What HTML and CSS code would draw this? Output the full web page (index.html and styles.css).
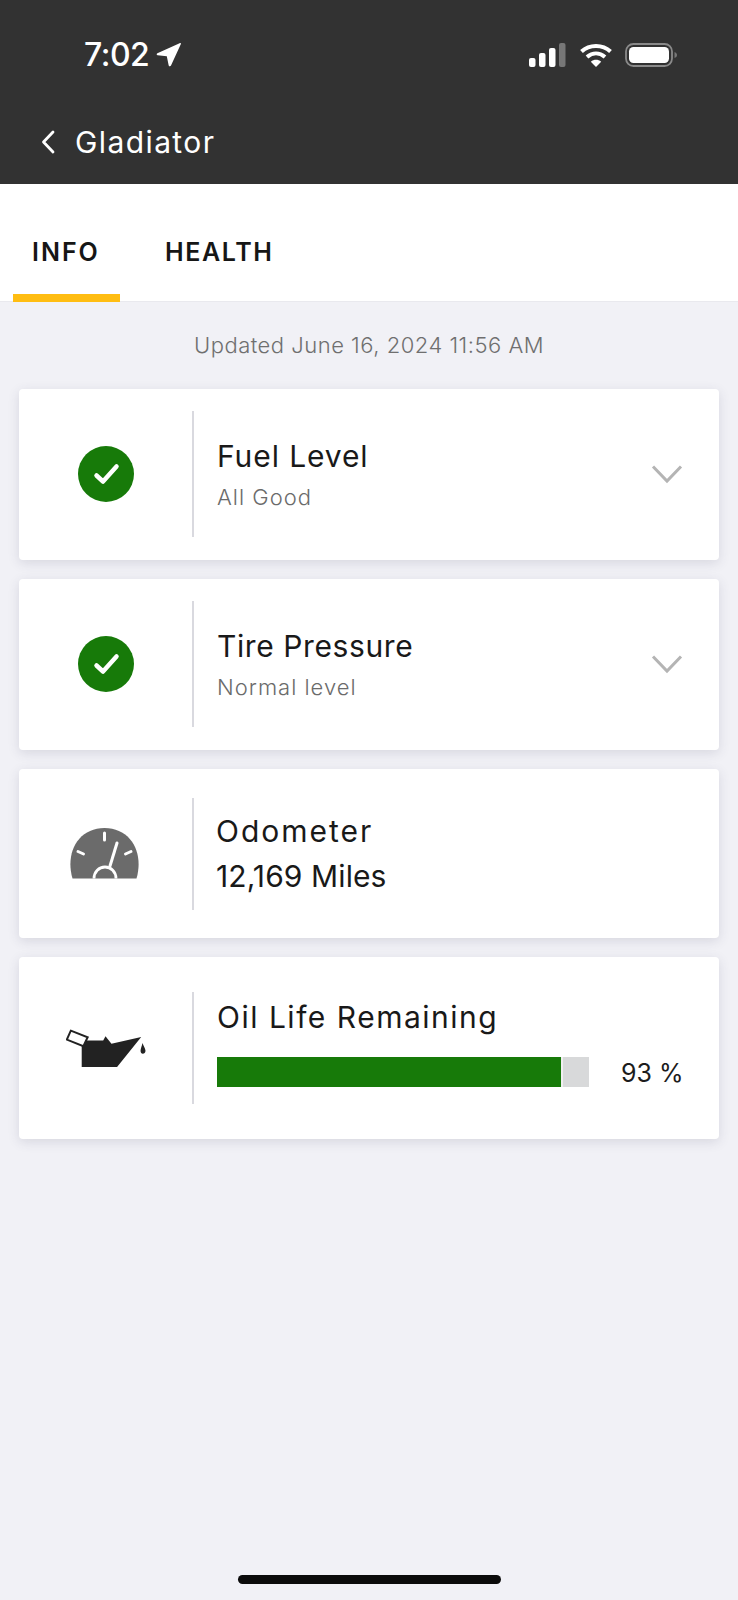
FILE: index.html
```html
<!DOCTYPE html>
<html lang="en">
<head>
<meta charset="utf-8">
<title>Gladiator</title>
<link rel="stylesheet" href="styles.css">
</head>
<body>
<div class="screen">
  <header class="header">
    <div class="status">
      <div class="status-left">
        <span class="time">7:02</span>
        <svg class="loc" viewBox="0 0 26 24"><path d="M25 .8 15 22.600c-.5 1.100-2 1-2.300-.2L10.800 13.300 1.700 12.300C.5 12.100.3 10.700 1.400 10.200L23.600 .2c.9-.4 1.800.4 1.400.6Z" fill="#fff"/></svg>
      </div>
      <div class="status-right">
        <svg class="signal" viewBox="0 0 37 24"><rect x="0" y="15" width="6.500" height="9" rx="2" fill="#fff"/><rect x="10" y="10" width="6.500" height="14" rx="2" fill="#fff"/><rect x="20" y="5" width="6.500" height="19" rx="2" fill="#fff"/><rect x="30" y="0" width="6.500" height="24" rx="2" fill="#777"/></svg>
        <svg class="wifi" viewBox="0 0 32 24"><path d="M1.500 8.500C9.500 1 22.500 1 30.500 8.500" fill="none" stroke="#fff" stroke-width="4"/><path d="M7 14c5.500-4.700 12.500-4.700 18 0" fill="none" stroke="#fff" stroke-width="4"/><path d="M10.800 18.800c3.200-2.600 7.200-2.600 10.400 0L16 24Z" fill="#fff"/></svg>
        <svg class="battery" viewBox="0 0 52 24"><rect x="1" y="1" width="46" height="22" rx="7.500" fill="none" stroke="#8a8a8a" stroke-width="1.800"/><rect x="4" y="4" width="40" height="16" rx="4.500" fill="#fff"/><path d="M49.500 9c1.500.5 2.500 1.500 2.500 3s-1 2.500-2.500 3Z" fill="#777"/></svg>
      </div>
    </div>
    <div class="nav">
      <svg class="back" viewBox="0 0 14 24"><path d="M12 2 2.500 12 12 22" fill="none" stroke="#fff" stroke-width="2.800" stroke-linecap="round" stroke-linejoin="round"/></svg>
      <span class="nav-title">Gladiator</span>
    </div>
  </header>

  <nav class="tabs">
    <div class="tab tab-active">INFO</div>
    <div class="tab">HEALTH</div>
  </nav>

  <main class="content">
    <p class="updated">Updated June 16, 2024 11:56 AM</p>

    <section class="card card-status">
      <div class="card-icon">
        <svg class="check" viewBox="0 0 56 56"><circle cx="28" cy="28" r="28" fill="#177a09"/><path d="M18.500 29.500l6.500 6 13.500-15" fill="none" stroke="#fff" stroke-width="4.500" stroke-linecap="round" stroke-linejoin="round"/></svg>
      </div>
      <div class="card-divider"></div>
      <div class="card-body">
        <div class="title t-fuel">Fuel Level</div>
        <div class="sub">All Good</div>
      </div>
      <svg class="chev" viewBox="0 0 32 20"><path d="M2 2.500 16 17 30 2.500" fill="none" stroke="#b4b4b4" stroke-width="3"/></svg>
    </section>

    <section class="card card-status">
      <div class="card-icon">
        <svg class="check" viewBox="0 0 56 56"><circle cx="28" cy="28" r="28" fill="#177a09"/><path d="M18.500 29.500l6.500 6 13.500-15" fill="none" stroke="#fff" stroke-width="4.500" stroke-linecap="round" stroke-linejoin="round"/></svg>
      </div>
      <div class="card-divider"></div>
      <div class="card-body">
        <div class="title t-tire">Tire Pressure</div>
        <div class="sub">Normal level</div>
      </div>
      <svg class="chev" viewBox="0 0 32 20"><path d="M2 2.500 16 17 30 2.500" fill="none" stroke="#b4b4b4" stroke-width="3"/></svg>
    </section>

    <section class="card card-odo">
      <div class="card-icon">
        <svg class="gauge" viewBox="0 0 70 52">
          <path d="M2.500 50.500C-5 25 8 0 34.500 0S74 25 66.500 50.500Z" fill="#6b6b6b"/>
          <path d="M24 50.500C24 44 29 39 35 39s11 5 11 11.500" fill="none" stroke="#fff" stroke-width="2.800"/>
          <path d="M40 38 47 15" stroke="#fff" stroke-width="3" stroke-linecap="round"/>
          <path d="M34.500 5v7M8 23.500l5.500 2.500M61 23.500 55.500 26" stroke="#fff" stroke-width="3" stroke-linecap="round"/>
        </svg>
      </div>
      <div class="card-divider"></div>
      <div class="card-body">
        <div class="title t-odo">Odometer</div>
        <div class="title t-miles">12,169 Miles</div>
      </div>
    </section>

    <section class="card card-oil">
      <div class="card-icon">
        <svg class="oil" viewBox="78 113 244 118">
          <path d="M125 148H190L197 135 215 158 305 137 232 228H125Z" fill="#222"/>
          <path d="M92 118 143 138 130 165 80 145Z" fill="#fff" stroke="#222" stroke-width="6"/>
          <path d="M309 155C312 165 318 172 318 179 318 185 314 188 310 188 306 188 303 185 303 179 303 172 307 165 309 155Z" fill="#222"/>
        </svg>
      </div>
      <div class="card-divider"></div>
      <div class="card-body">
        <div class="title t-oil">Oil Life Remaining</div>
        <div class="oil-row">
          <div class="bar"><div class="bar-fill" style="width:93%"></div></div>
          <span class="pct">93 %</span>
        </div>
      </div>
    </section>
  </main>

  <div class="home-row"><div class="home-bar"></div></div>
</div>
</body>
</html>
```

FILE: styles.css
```css
* { box-sizing: border-box; }
html, body { margin: 0; padding: 0; }
body { font-family: "Inter", "Noto Sans", "Liberation Sans", sans-serif; background: #f1f1f6; color: #1a1a1a; }
.screen { width: 738px; height: 1600px; display: flex; flex-direction: column; overflow: hidden; }

.header { height: 184px; background: #323232; color: #fff; padding-top: 38px; flex: none; }
.status { display: flex; justify-content: space-between; align-items: center; height: 34px; padding: 0 61px 0 84px; }
.status-left { display: flex; align-items: center; gap: 7px; }
.time { font-size: 32px; font-weight: 500; line-height: 34px; letter-spacing: -.5px; }
.loc { width: 26px; height: 24px; }
.status-right { display: flex; align-items: center; gap: 13px; }
.signal { width: 37px; height: 24px; margin-right: 1px; }
.wifi { width: 32px; height: 24px; }
.battery { width: 52px; height: 24px; }

.nav { display: flex; align-items: center; gap: 20px; padding: 53px 0 0 41px; }
.back { width: 14px; height: 24px; }
.nav-title { font-size: 30px; line-height: 34px; letter-spacing: 1.400px; }

.tabs { flex: none; display: flex; height: 118px; background: #fff; padding-left: 13px; gap: 25px; border-bottom: 1px solid #e9e9ee; }
.tab { height: 118px; padding: 51px 20px 0; font-size: 25px; font-weight: 600; line-height: 34px; color: #161616; letter-spacing: 1.600px; }
.tab-active { width: 107px; padding-left: 19px; padding-right: 0; letter-spacing: 2px; border-bottom: 8px solid #ffbd12; }

.content { flex: 1; padding: 0 19px; display: flex; flex-direction: column; }
.updated { margin: 0; padding-top: 26px; height: 87px; text-align: center; font-size: 22px; line-height: 34px; color: #6f6f6f; letter-spacing: .5px; font-weight: 300; }
.card { background: #fff; border-radius: 4px; box-shadow: 0 3px 12px rgba(60, 60, 90, .14); display: flex; align-items: center; margin-bottom: 19px; flex: none; }
.card-status { height: 171px; }
.card-odo { height: 169px; }
.card-oil { height: 182px; }
.card-icon { width: 173px; display: flex; justify-content: center; flex: none; }
.card-divider { width: 2px; background: #d9d9df; flex: none; }
.card-status .card-divider { height: 126px; margin-top: -1px; }
.card-odo .card-divider, .card-oil .card-divider { height: 112px; }
.card-body { flex: 1; padding-left: 23px; min-width: 0; }
.check { width: 56px; height: 56px; margin: -2px 0 0 1px; }
.gauge { width: 70px; height: 52px; margin: 1px 0 0 -1px; }
.oil { width: 81px; height: 39px; margin-left: 1px; }

.title { font-size: 30px; line-height: 38px; color: #191919; font-weight: 400; }
.t-fuel { letter-spacing: .9px; }
.t-tire { letter-spacing: .6px; }
.t-odo { letter-spacing: 2px; }
.t-miles { letter-spacing: .1px; margin-top: 7px; }
.t-oil { letter-spacing: 1.500px; }
.sub { font-size: 22px; line-height: 30px; margin-top: 7px; color: #6b6b6b; font-weight: 300; letter-spacing: 1px; }
.chev { width: 32px; height: 20px; margin: -2px 36px 0 0; flex: none; }
.card-odo .card-body { padding-left: 22px; }
.card-oil .card-body { padding-bottom: 11px; }

.oil-row { display: flex; align-items: center; margin-top: 21px; }
.bar { width: 372px; height: 30px; background: #d8d9da; flex: none; }
.bar-fill { height: 100%; background: #177a09; border-right: 2px solid #f0f0f0; }
.pct { margin-left: 32px; font-size: 25px; letter-spacing: 0; color: #1c1c1c; line-height: 30px; padding-top: 1px; }

.home-row { flex: none; height: 25px; padding-bottom: 16px; display: flex; justify-content: center; }
.home-bar { width: 263px; height: 9px; border-radius: 5px; background: #0b0b0b; }
```
